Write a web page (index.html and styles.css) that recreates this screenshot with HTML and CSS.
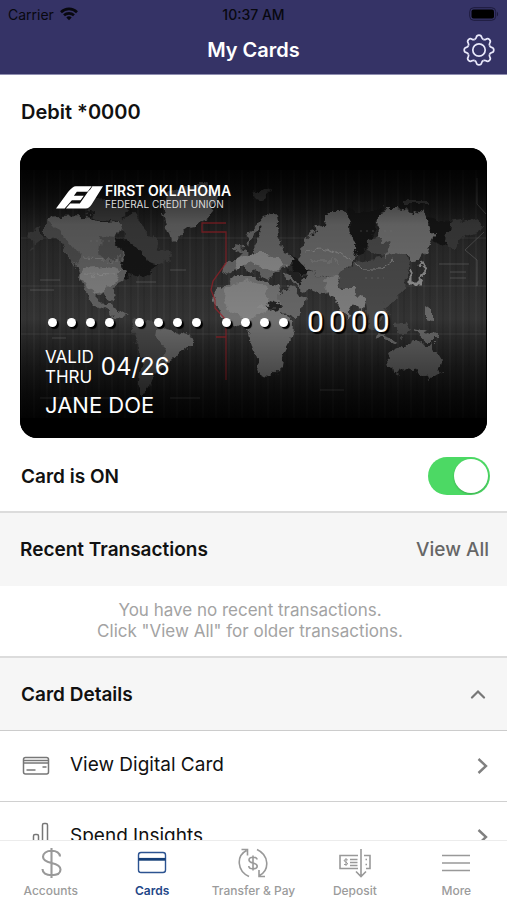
FILE: index.html
```html
<!DOCTYPE html>
<html lang="en">
<head>
<meta charset="utf-8">
<meta name="viewport" content="width=device-width, initial-scale=1">
<title>My Cards</title>
<link rel="stylesheet" href="styles.css">
</head>
<body>
<header class="top">
  <div class="status">
    <span class="carrier">Carrier
      <svg width="18" height="14" viewBox="0 0 18 14" fill="none" stroke="#08080f" stroke-width="2.6" aria-hidden="true"><path d="M1 5.2C5.500 .8 12.500 .8 17 5.200"/><path d="M4 8.300C6.800 5.700 11.200 5.700 14 8.300"/><path d="M6.300 10.400C7.900 9 10.100 9 11.700 10.400L9 13.200Z" fill="#08080f" stroke="none"/></svg>
    </span>
    <span class="time">10:37 AM</span>
    <svg class="battery" width="30" height="14" viewBox="0 0 30 14" aria-hidden="true"><rect x=".7" y=".7" width="26" height="12.600" rx="4" fill="none" stroke="#1d1b3d"/><rect x="2.500" y="2.500" width="22.500" height="9" rx="2" fill="#000"/><path d="M28 4.700c1.500.7 1.500 3.900 0 4.600z" fill="#1d1b3d"/></svg>
  </div>
  <div class="titlebar">
    <h1>My Cards</h1>
    <button class="gear" aria-label="Settings">
      <svg width="32" height="32" viewBox="-16 -16 32 32" fill="none" stroke="#e9e9fb" stroke-width="1.700" aria-hidden="true">
        <defs><path id="tooth" d="M-4.400-10.600C-3.200-11.100-2.900-11.600-2.700-12.600C-2.400-14.200-1.700-14.800 0-14.800S2.400-14.200 2.700-12.600C2.900-11.600 3.200-11.100 4.400-10.600"/></defs>
        <use href="#tooth"/><use href="#tooth" transform="rotate(45)"/><use href="#tooth" transform="rotate(90)"/><use href="#tooth" transform="rotate(135)"/><use href="#tooth" transform="rotate(180)"/><use href="#tooth" transform="rotate(225)"/><use href="#tooth" transform="rotate(270)"/><use href="#tooth" transform="rotate(315)"/>
        <circle r="6.200"/>
      </svg>
    </button>
  </div>
</header>

<main>
  <h2 class="account">Debit *0000</h2>
  <section class="card" aria-label="Debit card">
    <svg class="art" viewBox="0 0 467 290" preserveAspectRatio="none" aria-hidden="true">
      <defs>
        <linearGradient id="base" x1="0" y1="0" x2="0" y2="1"><stop offset="0" stop-color="#0a0a0a"/><stop offset=".3" stop-color="#2a2a2a"/><stop offset=".6" stop-color="#333"/><stop offset=".8" stop-color="#1f1f1f"/><stop offset="1" stop-color="#0a0a0a"/></linearGradient>
        <linearGradient id="shade" x1="0" y1="0" x2="0" y2="1"><stop offset="0" stop-color="#000" stop-opacity=".75"/><stop offset=".22" stop-color="#000" stop-opacity=".15"/><stop offset=".6" stop-color="#000" stop-opacity="0"/><stop offset=".85" stop-color="#000" stop-opacity=".4"/><stop offset="1" stop-color="#000" stop-opacity=".7"/></linearGradient>
        <filter id="coast" x="0" y="0" width="1" height="1"><feTurbulence type="fractalNoise" baseFrequency=".09" numOctaves="4" seed="4" result="n"/><feDisplacementMap in="SourceGraphic" in2="n" scale="13" xChannelSelector="R" yChannelSelector="G"/><feGaussianBlur stdDeviation=".6"/></filter>
        <pattern id="zones" width="13" height="250" patternUnits="userSpaceOnUse"><path d="M1 0V250" stroke="#fff" stroke-opacity=".06"/><path d="M7 0V250" stroke="#000" stroke-opacity=".08" stroke-width="2"/></pattern>
      </defs>
      <rect width="467" height="290" fill="#000"/>
      <rect x="1" y="22" width="465" height="248" fill="url(#base)"/>
      <rect x="1" y="22" width="465" height="248" fill="url(#zones)"/>
      <g stroke="#fff" stroke-opacity=".09"><path d="M1 90H466M1 138H466M1 186H466"/></g>
      <g filter="url(#coast)">
        <rect width="467" height="290" fill="none"/>
        <path fill="#181818" d="M98 92 126 90 140 116 118 130 104 126ZM328 62H362L350 92 336 112 330 90ZM408 70 430 72 428 98 412 92ZM268 108 282 112 290 126 276 128Z"/>
        <g fill="#3b3b3b">
          <path d="M98 72 112 66 124 78 133 88 140 104 150 108 138 116 128 114 120 100 106 90Z"/>
          <path d="M62 54 80 50 92 58 108 62 100 72 80 70 66 66Z"/>
          <path d="M429 75 459 70 464 79 443 89 436 102 426 102Z"/>
          <path d="M232 44 240 40 252 42 246 50 236 52ZM385 52H408V56H385Z"/>
          <path d="M8 86 20 78 24 92 12 100Z"/>
        </g>
        <path fill="#606060" d="M26 70 38 69 66 68 86 73 96 72 101 76 97 90 98 104 104 108 101 118 107 124 105 131 97 137 92 144 94 154 88 150 84 143 76 150 82 156 92 156 97 163 110 168 104 171 92 166 76 158 68 147 60 132 55 116 47 104 40 92 28 86Z"/>
        <path fill="#7c7c7c" d="M62 120 88 118 100 122 96 136 86 142 76 146 68 140 60 128Z"/>
        <path fill="#4c4c4c" d="M26 72 46 92 58 106 56 116 40 94 26 86ZM80 88 97 90 98 104 103 112 84 112 78 104Z"/>
        <path fill="#646464" d="M143 62 146 45 160 36 185 36 196 45 190 66 186 74 172 77 163 84 156 92 150 88 146 76Z"/>
        <path fill="#464646" d="M115 170 130 172 143 176 160 184 172 188 166 200 156 207 149 216 140 222 132 230 128 243 122 252 118 242 120 225 123 209 117 199 112 185Z"/>
        <path fill="#696969" d="M139 177 162 184 173 188 166 200 156 207 149 216 140 214 145 200 137 190Z"/>
        <path fill="#666" d="M225 92 230 83 243 68 256 66 258 89 266 105 272 112 260 122 250 132 240 126 232 122 226 124 222 114 212 124 204 126 206 117 214 112 222 104 212 102 212 98 224 100 230 106 238 98 244 80 234 86 230 98Z"/>
        <path fill="#888" d="M214 111 228 106 250 106 266 114 254 124 240 118 228 114 216 120Z"/>
        <path fill="#717171" d="M203 139 214 129 236 129 245 134 260 138 265 152 262 164 271 176 270 192 262 207 260 219 250 228 241 227 236 212 231 194 226 180 214 174 203 170 195 156 196 145Z"/>
        <path fill="#838383" d="M206 139 228 132 246 140 250 160 236 170 214 166 202 156Z"/>
        <path fill="#666" d="M258 146 270 140 286 150 284 164 272 172 262 162ZM262 126 290 124 312 132 320 140 300 146 286 142 270 134Z"/>
        <path fill="#686868" d="M279 112 286 92 296 79 306 75 308 62 323 62 330 75 331 92 338 109 328 119 318 126 308 130 296 126 286 120Z"/>
        <path fill="#484848" d="M316 126 340 113 363 109 381 104 394 115 386 125 384 142 373 156 362 163 354 155 338 152 326 144ZM346 102 348 92 362 89 374 96 363 109Z"/>
        <path fill="#6f6f6f" d="M359 70 366 60 380 60 403 65 408 76 413 90 403 109 394 113 382 104 364 111 370 96 358 89Z"/>
        <path fill="#7c7c7c" d="M302 134 316 126 324 142 334 142 346 152 344 160 334 156 326 170 318 158 308 148Z"/>
        <path fill="#494949" d="M346 152 364 154 368 164 360 172 354 182 348 168ZM376 176 388 174 386 186 376 186Z"/>
        <path fill="#686868" d="M393 180 404 182 418 188 420 192 404 192ZM358 186 376 192 374 195 356 190ZM406 160 412 164 412 174 406 172Z"/>
        <path fill="#606060" d="M368 205 386 197 399 193 405 199 410 193 422 212 418 226 410 231 396 222 386 220 371 226Z"/>
        <path d="M390 122 390 134 400 134 404 124 401 116" fill="none" stroke="#8c8c8c" stroke-width="3"/>
        <path d="M288 104 300 100 318 104 330 112 342 121 360 121 376 113" fill="none" stroke="#888" stroke-width="1"/>
        <path d="M266 120 284 126 278 136ZM250 152 262 156 256 164 247 158Z" fill="#222"/>
        <path d="M82 112 100 112M60 110 96 111M66 126 96 127M290 112H316M235 160H256" stroke="#aaa" stroke-opacity=".35" fill="none"/>
      </g>
      <g fill="none" stroke="#888" stroke-opacity=".4"><path d="M464 84 445 102 457 112V138M457 30V56L466 66M419 116H449M430 124H446M430 130H446M20 132H40M10 142H34M150 122H166M116 134H136M32 190H46M150 250H180M300 242H324M20 250H90"/><path d="M70 93H96M340 83H372M345 130H364" stroke-dasharray="2 4"/></g>
      <path d="M206 75H182V84H206V115L193 133 191 142 195 152V160L206 172V232M196 189H206" fill="none" stroke="#9c2028" stroke-width="1.300" stroke-opacity=".75"/>
      <rect x="1" y="22" width="465" height="248" fill="url(#shade)"/>
    </svg>
    <div class="face">
      <div class="brand">
        <svg width="47" height="23" viewBox="0 0 142 68" fill="#fff" aria-hidden="true"><path d="M0 67 37 17Q50 0 60 0H108L95 17H63L54 29H84L74 42H48L26 67Z"/><path d="M110 0H142L107 56Q100 67 90 67H30L43 52H72L100 12H102Z"/></svg>
        <div><p class="bank">FIRST OKLAHOMA</p><p class="union">FEDERAL CREDIT UNION</p></div>
      </div>
      <div class="number">
        <span class="dots"><i></i><i></i><i></i><i></i></span>
        <span class="dots"><i></i><i></i><i></i><i></i></span>
        <span class="dots"><i></i><i></i><i></i><i></i></span>
        <span class="last"><b>0</b><b>0</b><b>0</b><b>0</b></span>
      </div>
      <div class="valid"><span>VALID<br>THRU</span><strong>04/26</strong></div>
      <p class="holder">JANE DOE</p>
    </div>
  </section>

  <div class="power"><label for="on">Card is ON</label><input id="on" type="checkbox" role="switch" checked></div>

  <section>
    <div class="band"><h2>Recent Transactions</h2><a href="#all">View All</a></div>
    <p class="empty">You have no recent transactions.<br>Click "View All" for older transactions.</p>
  </section>

  <section>
    <button class="band details" aria-expanded="true"><span>Card Details</span>
      <svg width="16" height="10" viewBox="0 0 16 10" fill="none" stroke="#777" stroke-width="2.200" stroke-linecap="round" aria-hidden="true"><path d="M2 8.500 8 2.500l6 6"/></svg>
    </button>
    <a class="row" href="#digital">
      <svg width="28" height="20" viewBox="0 0 28 20" fill="none" stroke="#777" stroke-width="1.500" aria-hidden="true"><rect x="1.500" y="1.500" width="25" height="16.500" rx="2"/><path d="M1.500 4.500H26.500M1.500 7H26.500M4.500 14H13.500M20.500 11H24.500"/></svg>
      <span>View Digital Card</span>
      <svg width="12" height="18" viewBox="0 0 12 18" fill="none" stroke="#808080" stroke-width="2.400" aria-hidden="true"><path d="M1.500 2l7.500 7-7.500 7"/></svg>
    </a>
    <a class="row" href="#insights">
      <svg width="28" height="32" viewBox="0 0 28 32" fill="none" stroke="#777" stroke-width="1.500" aria-hidden="true"><path d="M11.500 31V15Q11.500 13.500 13 13.500H15Q16.500 13.500 16.500 15V31M20.500 31V4Q20.500 2.500 22 2.500H24Q25.500 2.500 25.500 4V31M3 31V21H7V31"/></svg>
      <span>Spend Insights</span>
      <svg width="12" height="18" viewBox="0 0 12 18" fill="none" stroke="#808080" stroke-width="2.400" aria-hidden="true"><path d="M1.500 2l7.500 7-7.500 7"/></svg>
    </a>
  </section>
</main>

<nav class="tabs" aria-label="Main">
  <a href="#accounts"><svg width="32" height="32" viewBox="0 0 32 32" fill="none" stroke="#999" stroke-width="2.100" aria-hidden="true"><path d="M16.500 1V31M25 9.500C25 5.800 21.500 3.800 16.500 3.800S8 6.300 8 9.800C8 13.500 11 14.800 16.500 16S25.500 19 25.500 22.500 22 28.200 16.500 28.200 7.500 26 7.500 22"/></svg>Accounts</a>
  <a class="active" href="#cards" aria-current="page"><svg width="32" height="32" viewBox="0 0 32 32" fill="none" stroke="#2c5391" stroke-width="1.400" aria-hidden="true"><rect x="2.500" y="5.500" width="27" height="20" rx="2.500"/><path d="M2.500 12.300H29.500" stroke="#153f78" stroke-width="2.800"/></svg>Cards</a>
  <a href="#transfer"><svg width="32" height="32" viewBox="0 0 32 32" fill="none" stroke="#999" stroke-width="1.600" aria-hidden="true"><path d="M12 29.500C0 24 -1 9 9.500 3.500M4.500 2.500H10.500V8.500M20 2.500C32 8 33 23 22.500 28.500M22 23V29.500H28"/><path d="M16 8.500V23.500M20 12.500C20 10.800 18.500 10.200 16 10.200S12 11.300 12 13 13.500 15.400 16 16 20.200 17.400 20.200 19.200 18.500 21.800 16 21.800 11.800 20.800 11.800 19"/></svg>Transfer &amp; Pay</a>
  <a href="#deposit"><svg width="32" height="32" viewBox="0 0 32 32" fill="none" stroke="#999" stroke-width="1.600" aria-hidden="true"><path d="M19 21.500H1V8.500H19M25 8.500H31V21.500H27M22 2V29M17 24.500 22 29.500 27 24.500M11 12.500H18.500M11 15.500H18.500M11 18.500H18.500M26.500 12.500H28M26.500 17.500H28"/><path d="M7 11V19M8.800 12.800H6Q4.800 12.800 5.200 14L8 15.800Q9.500 17.400 7.500 17.500H5" stroke-width="1"/></svg>Deposit</a>
  <a href="#more"><svg width="32" height="32" viewBox="0 0 32 32" fill="none" stroke="#999" stroke-width="1.700" aria-hidden="true"><path d="M2 8.500H30M2 16H30M2 23.500H30"/></svg>More</a>
</nav>
</body>
</html>
```
FILE: styles.css
```css
* { box-sizing: border-box; }
body { margin: 0; height: 100vh; display: flex; flex-direction: column; background: #fff; color: #111; font-family: Inter, "Liberation Sans", sans-serif; font-size: 19px; }
h1, h2, p { margin: 0; }
a { color: inherit; text-decoration: none; }
button { font: inherit; color: inherit; border: 0; background: none; padding: 0; }
svg { display: block; flex: none; }

.top { flex: none; background: #353366; border-bottom: 1px solid #8f8eb0; }
.status { display: grid; grid-template-columns: 1fr auto 1fr; align-items: center; height: 28px; padding: 0 8px; font-size: 14px; color: #08080f; }
.carrier { display: flex; align-items: center; gap: 6px; }
.time { font-weight: 500; }
.battery { justify-self: end; }
.titlebar { display: grid; grid-template-columns: 1fr auto 1fr; align-items: center; height: 46px; padding: 0 12px 2px; }
.titlebar h1 { grid-column: 2; font-size: 20px; font-weight: 600; color: #fff; }
.gear { justify-self: end; }

main { flex: 1; min-height: 0; overflow-y: auto; scrollbar-width: none; }
.account { padding: 25px 21px 24px; font-size: 20px; line-height: 24px; font-weight: 600; }

.card { display: grid; margin: 0 20px; aspect-ratio: 467 / 290; border-radius: 17px; overflow: hidden; background: #000; color: #fff; }
.card > * { grid-area: 1 / 1; }
.art { width: 100%; height: 100%; }
.face { position: relative; padding: 36px 25px 0; }
.brand { display: flex; align-items: center; gap: 2px; padding-left: 11px; }
.bank { font-size: 14px; line-height: 14px; font-weight: 600; }
.union { font-size: 10px; line-height: 12px; color: #ddd; }
.number { display: flex; align-items: center; gap: 21px; height: 30px; margin-top: 97px; padding-left: 3px; }
.dots { display: flex; gap: 10px; }
.dots i { width: 9px; height: 9px; border-radius: 50%; background: #fff; box-shadow: 2px 2px 1px #000; }
.last { display: flex; gap: 5px; margin-left: -2px; }
.last b { font: 400 30px/30px Roboto, sans-serif; text-shadow: 2px 2px 1px #000; }
.valid { display: flex; align-items: center; gap: 7px; margin-top: 10px; font-size: 17px; line-height: 20px; }
.valid strong { font-size: 24px; font-weight: 400; }
.holder { margin-top: 6px; font-size: 22px; line-height: 24px; }

.power { display: flex; align-items: center; justify-content: space-between; height: 75px; padding: 3px 17px 0 21px; border-bottom: 2px solid #dcdcdc; font-weight: 600; }
.power input { appearance: none; display: grid; align-items: center; width: 62px; height: 38px; margin: 0; padding: 2px; border-radius: 19px; background: #4cd964; }
.power input::before { content: ""; width: 34px; height: 34px; border-radius: 50%; background: #fff; box-shadow: 0 1px 2px #0003; justify-self: start; }
.power input:checked::before { justify-self: end; }

.band { display: flex; align-items: center; justify-content: space-between; width: 100%; height: 73px; padding: 0 18px 0 20px; background: #f6f6f6; font-weight: 600; }
.band h2 { font-size: 19px; font-weight: 600; }
.band a { color: #666; font-weight: 500; }
.empty { padding: 14px 27px 14px 20px; text-align: center; font-size: 17px; line-height: 21px; color: #a3a3a3; border-bottom: 2px solid #dcdcdc; }
.details { padding: 0 21px; border-bottom: 1px solid #ccc; }
.row { display: grid; grid-template-columns: 28px 1fr 12px; align-items: center; column-gap: 20px; height: 71px; padding: 0 18px 0 22px; border-bottom: 1px solid #d0d0d0; }
.row span { padding-bottom: 3px; }

.tabs { flex: none; display: grid; grid-template-columns: repeat(5, 1fr); height: 60px; background: #fff; border-top: 1px solid #ececec; font-size: 12px; font-weight: 500; line-height: 15px; color: #9b9b9b; }
.tabs a { display: flex; flex-direction: column; align-items: center; gap: 4px; padding-top: 6px; white-space: nowrap; }
.tabs .active { color: #1f4788; font-weight: 600; }
```
